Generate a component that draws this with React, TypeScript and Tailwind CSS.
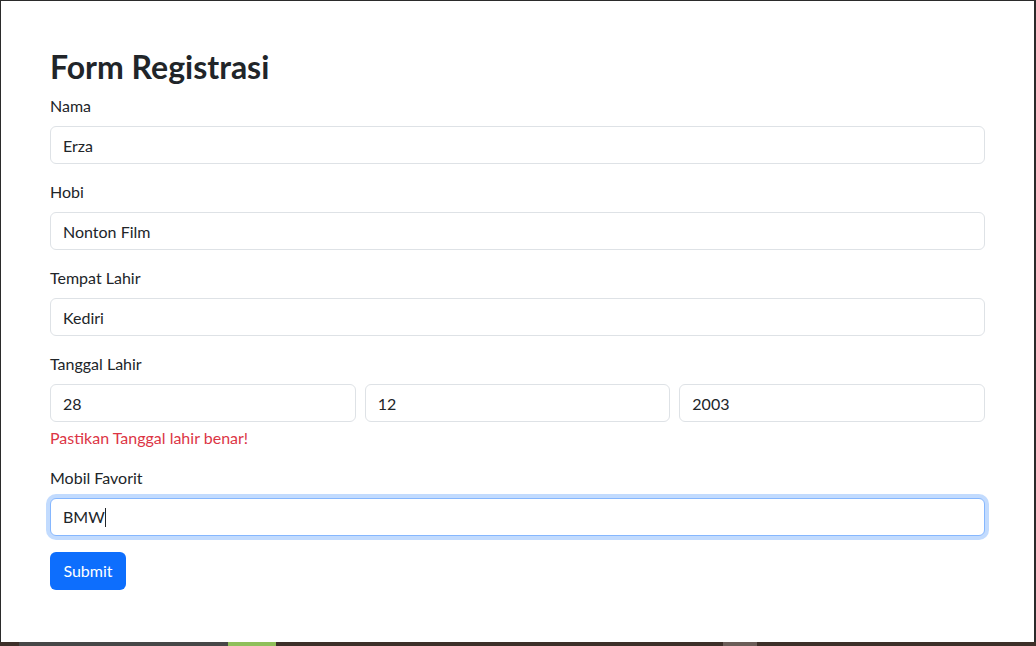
import { useState } from 'react'

const inputCls =
  'block w-full h-[38px] px-3 border border-[#dee2e6] rounded-[6px] bg-white text-[16px] text-[#212529] outline-none'

function Field({ label, value }: { label: string; value: string }) {
  const [val, setVal] = useState(value)
  return (
    <div className="mb-4">
      <label className="block mb-2 leading-6">{label}</label>
      <input className={inputCls} value={val} onChange={(e) => setVal(e.target.value)} />
    </div>
  )
}

export default function App() {
  const [tgl, setTgl] = useState(['28', '12', '2003'])

  return (
    <div className="w-[1036px] h-[646px] bg-[#3d2f29] flex flex-col">
      <div
        className="h-[642px] bg-white border-t border-l border-r-2 border-[#2b2b2b] text-[16px] text-[#212529] px-[49px] pt-[47px]"
        style={{ fontFamily: 'Lato, "Noto Sans", sans-serif' }}
      >
        {/* Judul */}
        <h1 className="text-[32px] font-bold leading-[1.2] mb-2">Form Registrasi</h1>

        <Field label="Nama" value="Erza" />
        <Field label="Hobi" value="Nonton Film" />
        <Field label="Tempat Lahir" value="Kediri" />

        {/* Tanggal lahir */}
        <div className="mb-4">
          <label className="block mb-2 leading-6">Tanggal Lahir</label>
          <div className="grid grid-cols-3 gap-[9px]">
            {tgl.map((t, idx) => (
              <input
                key={idx}
                className={inputCls}
                value={t}
                onChange={(e) => {
                  const next = [...tgl]
                  next[idx] = e.target.value
                  setTgl(next)
                }}
              />
            ))}
          </div>
          <p className="mt-1 leading-6 text-[#dc3545]">Pastikan Tanggal lahir benar!</p>
        </div>

        {/* Mobil favorit (sedang fokus) */}
        <div className="mb-4">
          <label className="block mb-2 leading-6">Mobil Favorit</label>
          <div className="flex items-center w-full h-[38px] px-3 border border-[#86b7fe] rounded-[6px] bg-white shadow-[0_0_0_4px_rgba(13,110,253,0.25)]">
            <span>BMW</span>
            <span className="inline-block w-px h-[19px] bg-[#212529]" />
          </div>
        </div>

        <button className="h-[38px] w-[76px] rounded-[6px] bg-[#0d6efd] text-white">Submit</button>
      </div>
      <div className="flex-1 flex">
        <div className="ml-[19px] w-[209px] bg-[#474747]" />
        <div className="w-[48px] bg-[#8fbf5a]" />
        <div className="ml-[447px] w-[34px] bg-[#6b5d58]" />
      </div>
    </div>
  )
}
